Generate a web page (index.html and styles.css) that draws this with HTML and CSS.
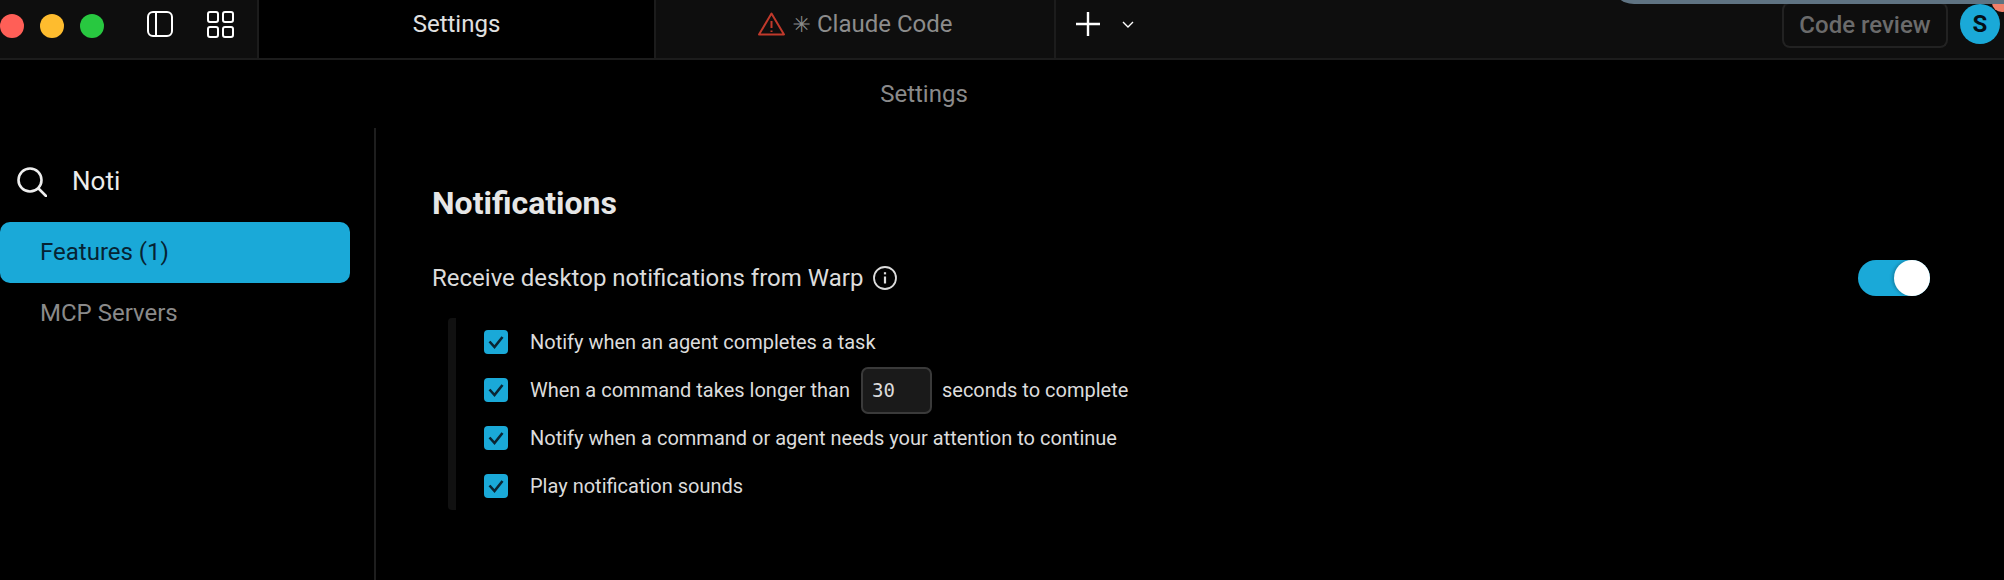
FILE: index.html
```html
<!DOCTYPE html>
<html lang="en">
<head>
<meta charset="utf-8">
<title>Settings</title>
<link rel="stylesheet" href="styles.css">
</head>
<body>
<div class="app">
  <header class="titlebar">
    <div class="lights">
      <span class="light red"></span>
      <span class="light yellow"></span>
      <span class="light green"></span>
    </div>
    <div class="tools">
      <svg class="tool" viewBox="0 0 26 26" width="26" height="26" fill="none" stroke="#fff" stroke-width="2"><rect x="1" y="1" width="24" height="24" rx="5"/><path d="M9 1v24"/></svg>
      <svg class="tool" viewBox="0 0 27 27" width="27" height="27" fill="none" stroke="#fff" stroke-width="2"><rect x="1" y="1" width="10" height="10" rx="2"/><rect x="16" y="1" width="10" height="10" rx="2"/><rect x="1" y="16" width="10" height="10" rx="2"/><rect x="16" y="16" width="10" height="10" rx="2"/></svg>
    </div>
    <div class="tab active">Settings</div>
    <div class="tab wide">
      <svg class="warn" viewBox="0 0 27 24" width="27" height="24" fill="none" stroke="#c0392b" stroke-width="2" stroke-linejoin="round"><path d="M13.5 1.5 26 22.5H1z"/><path d="M13.5 9v7M13.5 18.5v1.5"/></svg>
      <span class="tab-label"><span class="star">✳</span> Claude Code</span>
    </div>
    <div class="newtab">
      <svg viewBox="0 0 24 24" width="24" height="24" fill="none" stroke="#fff" stroke-width="2.4"><path d="M12 0v24M0 12h24"/></svg>
      <svg viewBox="0 0 12 7" width="12" height="7" fill="none" stroke="#fff" stroke-width="1.4"><path d="M1 1l5 5 5-5"/></svg>
    </div>
    <div class="right">
      <div class="review">Code review</div>
      <div class="avatar">S</div>
    </div>
    <div class="overlay-band"></div>
    <div class="overlay-dot"></div>
  </header>
  <div class="page-title">Settings</div>
  <main class="body">
    <aside class="sidebar">
      <div class="search">
        <svg viewBox="0 0 30 30" width="30" height="30" fill="none" stroke="#eee" stroke-width="2.6" stroke-linecap="round"><circle cx="13" cy="13" r="11.5"/><path d="M21.5 21.5 29 29"/></svg>
        <span class="search-text">Noti</span>
      </div>
      <div class="nav selected">Features (1)</div>
      <div class="nav">MCP Servers</div>
    </aside>
    <section class="content">
      <h1>Notifications</h1>
      <div class="master">
        <div class="master-label">
          <span>Receive desktop notifications from Warp</span>
          <svg viewBox="0 0 24 24" width="24" height="24" fill="none" stroke="#dcdcdc" stroke-width="1.8"><circle cx="12" cy="12" r="11"/><path d="M12 10.5v7" stroke-width="2.2"/><path d="M12 6.2v2.2" stroke-width="2.2"/></svg>
        </div>
        <div class="toggle"><span class="knob"></span></div>
      </div>
      <div class="group">
        <div class="row">
          <span class="check"><svg viewBox="0 0 24 24" width="24" height="24" fill="none" stroke="#0a2533" stroke-width="2.6"><path d="M5.5 11.5l5 5.5 8-10"/></svg></span>
          <span>Notify when an agent completes a task</span>
        </div>
        <div class="row">
          <span class="check"><svg viewBox="0 0 24 24" width="24" height="24" fill="none" stroke="#0a2533" stroke-width="2.6"><path d="M5.5 11.5l5 5.5 8-10"/></svg></span>
          <span>When a command takes longer than</span>
          <span class="num">30</span>
          <span>seconds to complete</span>
        </div>
        <div class="row">
          <span class="check"><svg viewBox="0 0 24 24" width="24" height="24" fill="none" stroke="#0a2533" stroke-width="2.6"><path d="M5.5 11.5l5 5.5 8-10"/></svg></span>
          <span>Notify when a command or agent needs your attention to continue</span>
        </div>
        <div class="row">
          <span class="check"><svg viewBox="0 0 24 24" width="24" height="24" fill="none" stroke="#0a2533" stroke-width="2.6"><path d="M5.5 11.5l5 5.5 8-10"/></svg></span>
          <span>Play notification sounds</span>
        </div>
      </div>
    </section>
  </main>
</div>
</body>
</html>
```
FILE: styles.css
```css
* { box-sizing: border-box; }
html, body { margin: 0; padding: 0; background: #000; }
body { font-family: Roboto, "Liberation Sans", sans-serif; overflow: hidden; }
.app { width: 2004px; height: 580px; display: flex; flex-direction: column; overflow: hidden; }

.titlebar { position: relative; z-index: 0; height: 60px; flex: none; display: flex; background: #0e0e0e; border-bottom: 2px solid #1c1c1c; }
.lights { display: flex; gap: 16px; align-items: center; height: 52px; flex: none; }
.light { width: 24px; height: 24px; border-radius: 50%; }
.red { background: #ff5f57; }
.yellow { background: #febc2e; }
.green { background: #28c840; }
.tools { display: flex; align-items: center; gap: 34px; height: 48px; margin-left: 43px; width: 110px; flex: none; }
.tool { flex: none; }
.tab { width: 397px; height: 58px; padding-bottom: 10px; flex: none; display: flex; align-items: center; justify-content: center; gap: 8px; border-left: 2px solid #1c1c1c; font-size: 24px; color: #8c8c8c; }
.tab.wide { width: 400px; }
.tab.active { background: #000; color: #e0e0e0; }
.tab-label { white-space: nowrap; }
.star { font-family: "DejaVu Sans", sans-serif; font-size: 22px; }
.newtab { display: flex; align-items: center; gap: 22px; height: 58px; padding: 0 0 10px 20px; border-left: 2px solid #1c1c1c; }
.right { margin-left: auto; display: flex; align-items: flex-start; gap: 12px; padding-right: 4px; padding-top: 2px; }
.review { width: 166px; height: 46px; border: 2px solid #222; border-top-color: #1a1a1a; border-radius: 8px; display: flex; align-items: center; justify-content: center; color: #6b6b6b; font-size: 24px; font-weight: 500; }
.avatar { width: 40px; height: 40px; margin-top: 2px; border-radius: 50%; background: #1aa9d8; color: #041018; font-weight: 700; font-size: 24px; display: flex; align-items: center; justify-content: center; }
.overlay-band { position: absolute; top: -40px; left: 1610px; right: -40px; height: 44px; background: #5f7382; border-radius: 0 0 0 24px; }
.overlay-dot { position: absolute; top: -6px; right: -8px; width: 20px; height: 18px; background: #f0806a; border-radius: 50%; z-index: -1; }

.page-title { height: 68px; flex: none; display: flex; align-items: center; justify-content: center; padding-right: 156px; color: #8a8a8a; font-size: 24px; }

.body { flex: 1; display: flex; min-height: 0; }
.sidebar { width: 376px; flex: none; border-right: 2px solid #1e1e1e; padding-top: 39px; }
.search { display: flex; align-items: center; gap: 25px; padding-left: 17px; height: 30px; color: #ececec; font-size: 26px; }
.search-text { padding-bottom: 2px; }
.nav { width: 350px; height: 61px; margin-top: 25px; padding: 0 0 2px 40px; display: flex; align-items: center; font-size: 24px; color: #8a8a8a; }
.nav + .nav { margin-top: 0; }
.nav.selected { background: #1aa9d8; color: #062333; border-radius: 10px; }

.content { flex: 1; padding: 57px 74px 0 56px; }
h1 { margin: 0; font-size: 32px; font-weight: 700; line-height: 36px; color: #e6e6e6; }
.master { display: flex; align-items: center; justify-content: space-between; margin-top: 39px; height: 36px; }
.master-label { display: flex; align-items: center; gap: 10px; font-size: 24px; color: #dcdcdc; }
.toggle { width: 72px; height: 36px; border-radius: 18px; background: #1aa9d8; display: flex; justify-content: flex-end; }
.knob { width: 36px; height: 36px; border-radius: 50%; background: #fff; box-shadow: -2px 0 3px rgba(0,0,0,.2); }
.group { margin: 22px 0 0 16px; width: 700px; height: 192px; border-left: 8px solid #111; border-radius: 4px; padding-left: 28px; }
.row { display: flex; align-items: center; height: 48px; font-size: 20px; color: #dcdcdc; }
.check { width: 24px; height: 24px; flex: none; background: #1aa9d8; border-radius: 4px; margin-right: 22px; display: flex; }
.num { width: 71px; height: 47px; flex: none; margin: 0 10px 0 11px; padding-left: 9px; display: flex; align-items: center; background: #1a1a1a; border: 2px solid #3a3a3a; border-radius: 7px; font-family: "DejaVu Sans Mono", monospace; font-size: 19px; color: #dcdcdc; }
```
